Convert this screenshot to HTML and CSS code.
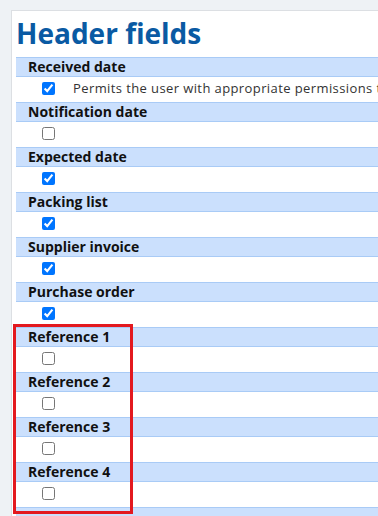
FILE: index.html
```html
<!DOCTYPE html>
<html lang="en">
<head>
    <meta charset="UTF-8">
    <meta name="viewport" content="width=device-width, initial-scale=1.0">
    <title>Header fields</title>
    <link rel="stylesheet" href="styles.css">
</head>
<body>

    <div class="panel">
        <h1 class="title">Header fields</h1>

        <div class="field">
            <div class="field-label">Received date</div>
            <div class="field-row">
                <input type="checkbox" checked>
                <span class="field-help">Permits the user with appropriate permissions to change the received date.</span>
            </div>
        </div>

        <div class="field">
            <div class="field-label">Notification date</div>
            <div class="field-row"><input type="checkbox"></div>
        </div>

        <div class="field">
            <div class="field-label">Expected date</div>
            <div class="field-row"><input type="checkbox" checked></div>
        </div>

        <div class="field">
            <div class="field-label">Packing list</div>
            <div class="field-row"><input type="checkbox" checked></div>
        </div>

        <div class="field">
            <div class="field-label">Supplier invoice</div>
            <div class="field-row"><input type="checkbox" checked></div>
        </div>

        <div class="field">
            <div class="field-label">Purchase order</div>
            <div class="field-row"><input type="checkbox" checked></div>
        </div>

        <div class="field">
            <div class="field-label">Reference 1</div>
            <div class="field-row"><input type="checkbox"></div>
        </div>

        <div class="field">
            <div class="field-label">Reference 2</div>
            <div class="field-row"><input type="checkbox"></div>
        </div>

        <div class="field">
            <div class="field-label">Reference 3</div>
            <div class="field-row"><input type="checkbox"></div>
        </div>

        <div class="field">
            <div class="field-label">Reference 4</div>
            <div class="field-row"><input type="checkbox"></div>
        </div>

        <div class="field">
            <div class="field-label"></div>
        </div>
    </div>

    <!-- highlight box drawn over the reference fields -->
    <div class="highlight"></div>

</body>
</html>
```

FILE: styles.css
```css
html, body {
    margin: 0;
    height: 100%;
    overflow: hidden;
}

body {
    font-family: "Open Sans", "DejaVu Sans", sans-serif;
    background-color: #eef2f5;
    position: relative;
}

.panel {
    width: 640px;
    margin: 10px 0 0 11px;
    padding: 0 0 0 4px;
    background-color: #fff;
    border-top: 1px solid #dcdfe3;
    border-left: 1px solid #dcdfe3;
}

.title {
    margin: 5px 0 7px 0;
    font-size: 28px;
    line-height: 34px;
    font-weight: 700;
    color: #0a5aa3;
}

.field-label {
    height: 18px;
    padding-left: 12px;
    background-color: #cbe0fd;
    border-top: 1px solid #a9cbf6;
    border-bottom: 1px solid #a9cbf6;
    font-size: 14px;
    line-height: 18px;
    font-weight: 700;
    color: #111;
}

.field-row {
    display: flex;
    align-items: flex-start;
    height: 25px;
    padding-left: 26px;
}

    .field-row input {
        margin: 5px 0 0 0;
        width: 13px;
        height: 13px;
    }

.field-help {
    margin: 2px 0 0 18px;
    font-size: 13px;
    line-height: 18px;
    letter-spacing: 0.4px;
    color: #333;
    white-space: nowrap;
}

.highlight {
    position: absolute;
    left: 13px;
    top: 324px;
    width: 114px;
    height: 184px;
    border: 3px solid #e3191f;
}
```
